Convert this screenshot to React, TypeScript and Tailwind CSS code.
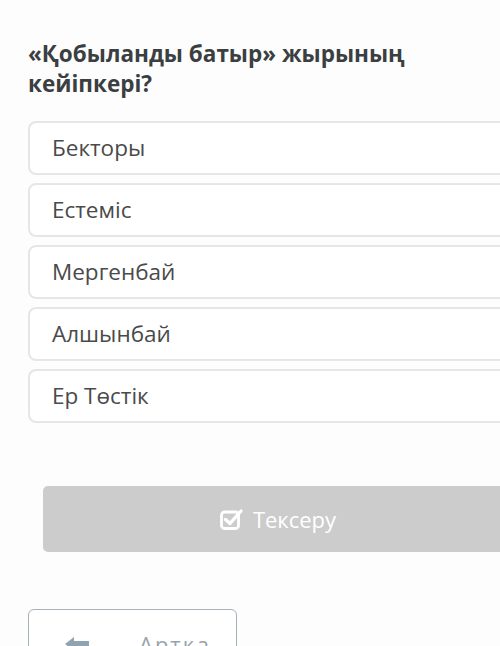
import React from "react";

const options = ["Бекторы", "Естеміс", "Мергенбай", "Алшынбай", "Ер Төстік"];

export default function App() {
  return (
    <div
      className="w-[500px] h-[646px] overflow-hidden bg-[#fdfdfd]"
      style={{ fontFamily: '"Open Sans", "Noto Sans", sans-serif' }}
    >
      <div className="pt-[39px] pl-[28px]">
        <h1 className="text-[22.5px] leading-[30px] font-bold text-[#3b3f42] w-[420px]">
          «Қобыланды батыр» жырының кейіпкері?
        </h1>
        <div className="mt-[22px] flex flex-col gap-[8px] w-[490px]">
          {options.map((o) => (
            <div
              key={o}
              className="h-[54px] rounded-[8px] border-2 border-[#e6e6e6] bg-white flex items-center pl-[22px] text-[22.5px] text-[#4a4a4a]"
            >
              {o}
            </div>
          ))}
        </div>
        <div className="mt-[63px] ml-[15px] w-[470px] h-[66px] rounded-[5px] bg-[#cccccc] flex items-center justify-center gap-[9px] text-white text-[22px]">
          <svg width="24" height="22" viewBox="0 0 24 22" fill="none">
            <rect x="1.5" y="4" width="17" height="16.5" rx="3" stroke="white" strokeWidth="2.8" />
            <path d="M5.5 11.5 L10 15.5 L21 3" stroke="white" strokeWidth="3.4" strokeLinecap="round" strokeLinejoin="round" />
          </svg>
          <span>Тексеру</span>
        </div>
        <div className="mt-[57px] w-[209px] h-[56px] rounded-[6px] border-[1.5px] border-[#a7b1b7] bg-white flex items-center pl-[36px] gap-[50px] pt-[14px]">
          <svg width="24" height="14" viewBox="0 0 24 14">
            <path d="M9 0 L0 7 L9 14 L9 10 L24 10 L24 4 L9 4 Z" fill="#8fa3b1" />
          </svg>
          <span className="text-[22px] tracking-[2px] text-[#98a4ad]">Артқа</span>
        </div>
      </div>
    </div>
  );
}
